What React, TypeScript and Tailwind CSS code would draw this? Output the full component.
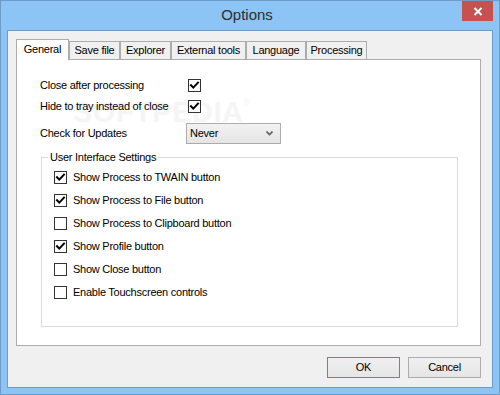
import React from "react";

const font = { fontFamily: '"Liberation Sans", Arial, sans-serif' };

function Check({ checked }: { checked: boolean }) {
  return (
    <div className="w-[13px] h-[13px] border border-[#333333] bg-white flex items-center justify-center shrink-0">
      {checked && (
        <svg width="11" height="11" viewBox="0 0 11 11">
          <path d="M2 5.2 L4.3 7.6 L9 2.6" fill="none" stroke="#000" strokeWidth="2" strokeLinecap="square" />
        </svg>
      )}
    </div>
  );
}

const tabs = [
  { name: "General", w: "w-[53px]" },
  { name: "Save file", w: "w-[51px]" },
  { name: "Explorer", w: "w-[51px]" },
  { name: "External tools", w: "w-[75px]" },
  { name: "Language", w: "w-[60px]" },
  { name: "Processing", w: "w-[61px]" },
];

const groupItems: [string, boolean][] = [
  ["Show Process to TWAIN button", true],
  ["Show Process to File button", true],
  ["Show Process to Clipboard button", false],
  ["Show Profile button", true],
  ["Show Close button", false],
  ["Enable Touchscreen controls", false],
];

export default function App() {
  return (
    <div
      className="w-[500px] h-[395px] bg-[#8cc4f6] border border-[#6f9bc9] flex flex-col text-[11px] tracking-[-0.25px] text-black overflow-hidden"
      style={font}
    >
      {/* Title bar */}
      <div className="h-[29px] flex shrink-0">
        <div className="flex-1" />
        <div className="text-[15px] tracking-normal text-[#2e2e2e] pt-[5px] leading-[18px]">Options</div>
        <div className="flex-1 flex justify-end pr-[6px]">
          <div className="w-[31px] h-[20px] bg-[#c75050] flex items-center justify-center">
            <svg width="10" height="9" viewBox="0 0 10 9">
              <path d="M1.5 1 L8.5 8 M8.5 1 L1.5 8" stroke="#fff" strokeWidth="2" />
            </svg>
          </div>
        </div>
      </div>

      {/* Client area */}
      <div className="mx-[6px] mb-[6px] flex-1 border border-[#6f9bc9] bg-[#f0f0f0] flex flex-col">
        {/* Tabs */}
        <div className="flex items-end h-[20px] mt-[8px] ml-[8px]">
          {tabs.map((t, i) =>
            i === 0 ? (
              <div
                key={t.name}
                className={`${t.w} h-[21px] -mb-px relative z-10 bg-white border border-b-0 border-[#acacac] flex justify-center pt-[3px] leading-[13px]`}
              >
                {t.name}
              </div>
            ) : (
              <div
                key={t.name}
                className={`${t.w} h-[18px] bg-[#f0f0f0] border border-b-0 border-[#acacac] flex justify-center pt-[2px] leading-[13px]`}
              >
                {t.name}
              </div>
            )
          )}
        </div>

        {/* Panel */}
        <div className="ml-[8px] mr-[11px] h-[287px] border border-[#acacac] bg-white relative pl-[23px] pt-[19px]">
          <div className="absolute left-[56px] top-[38px] text-[29px] font-bold tracking-[0.5px] text-[#f5f5f5] leading-none select-none pointer-events-none">
            SOFTPEDIA<span className="text-[9px] align-top">®</span>
          </div>

          <div className="relative">
            <div className="flex items-center h-[13px]">
              <div className="w-[148px] leading-[13px]">Close after processing</div>
              <Check checked />
            </div>
            <div className="flex items-center h-[13px] mt-[8px]">
              <div className="w-[148px] leading-[13px]">Hide to tray instead of close</div>
              <Check checked />
            </div>
            <div className="flex items-center h-[21px] mt-[10px]">
              <div className="w-[146px] leading-[13px]">Check for Updates</div>
              <div className="w-[95px] h-[21px] border border-[#acacac] bg-gradient-to-b from-[#f2f2f2] to-[#e5e5e5] flex items-center justify-between pl-[3px] pr-[7px]">
                <span className="leading-[13px]">Never</span>
                <svg width="7" height="5" viewBox="0 0 7 5">
                  <path d="M0.5 0.5 L3.5 3.5 L6.5 0.5" fill="none" stroke="#606060" strokeWidth="1.6" />
                </svg>
              </div>
            </div>

            <fieldset className="ml-[1px] mt-[7px] w-[417px] h-[176px] border border-[#dcdcdc] px-[6px]">
              <legend className="px-[2px] leading-[13px]">User Interface Settings</legend>
              <div className="pl-[6px] pt-[7px] flex flex-col gap-[10px]">
                {groupItems.map(([label, checked]) => (
                  <div key={label} className="flex items-center h-[13px] gap-[6px]">
                    <Check checked={checked} />
                    <span className="leading-[13px]">{label}</span>
                  </div>
                ))}
              </div>
            </fieldset>
          </div>
        </div>

        {/* Buttons */}
        <div className="flex justify-end gap-[8px] mt-[11px] mr-[11px]">
          <div className="w-[73px] h-[21px] border border-[#3c8ee0] bg-gradient-to-b from-[#f0f0f0] to-[#e5e5e5] flex items-center justify-center leading-[13px]">
            OK
          </div>
          <div className="w-[73px] h-[21px] border border-[#acacac] bg-gradient-to-b from-[#f0f0f0] to-[#e5e5e5] flex items-center justify-center leading-[13px]">
            Cancel
          </div>
        </div>
      </div>
    </div>
  );
}
